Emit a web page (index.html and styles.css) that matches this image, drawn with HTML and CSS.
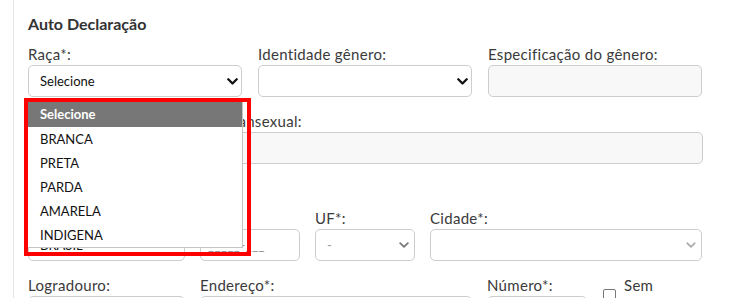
FILE: index.html
```html
<!DOCTYPE html>
<html lang="pt-BR">
<head>
<meta charset="utf-8">
<title>Auto Declaração</title>
<link rel="stylesheet" href="styles.css">
</head>
<body>
<div class="card">
  <section class="section">
    <h3 class="title">Auto Declaração</h3>
    <div class="row row-3">
      <div class="field">
        <label class="label">Raça*:</label>
        <div class="control select">
          <span class="value">Selecione</span>
          <svg class="chev" width="11" height="7" viewBox="0 0 11 7"><path d="M1.3 1.3 5.5 5.5 9.7 1.3" fill="none" stroke="#111" stroke-width="2.3" stroke-linecap="round" stroke-linejoin="round"/></svg>
        </div>
      </div>
      <div class="field">
        <label class="label">Identidade gênero:</label>
        <div class="control select">
          <span class="value"></span>
          <svg class="chev" width="11" height="7" viewBox="0 0 11 7"><path d="M1.3 1.3 5.5 5.5 9.7 1.3" fill="none" stroke="#111" stroke-width="2.3" stroke-linecap="round" stroke-linejoin="round"/></svg>
        </div>
      </div>
      <div class="field">
        <label class="label">Especificação do gênero:</label>
        <div class="control readonly"></div>
      </div>
    </div>
    <div class="row row-full">
      <div class="field">
        <label class="label">Nome social para travesti ou transexual:</label>
        <div class="control readonly"></div>
      </div>
    </div>
  </section>

  <section class="section">
    <h3 class="title">Endereço</h3>
    <div class="row row-a">
      <div class="field">
        <label class="label">País*:</label>
        <div class="control select">
          <span class="value">BRASIL</span>
          <svg class="chev" width="10" height="6" viewBox="0 0 10 6"><path d="M1.2 1.2 5 4.8 8.8 1.2" fill="none" stroke="#777" stroke-width="1.8" stroke-linecap="round" stroke-linejoin="round"/></svg>
        </div>
      </div>
      <div class="field">
        <label class="label">CEP*:</label>
        <div class="control input"><span class="mask">_____-___</span></div>
      </div>
      <div class="field">
        <label class="label">UF*:</label>
        <div class="control select">
          <span class="value muted">-</span>
          <svg class="chev chev-uf" width="10" height="6" viewBox="0 0 10 6"><path d="M1.2 1.2 5 4.8 8.8 1.2" fill="none" stroke="#7a7a7a" stroke-width="1.8" stroke-linecap="round" stroke-linejoin="round"/></svg>
        </div>
      </div>
      <div class="field">
        <label class="label">Cidade*:</label>
        <div class="control select">
          <span class="value"></span>
          <svg class="chev chev-uf" width="10" height="6" viewBox="0 0 10 6"><path d="M1.2 1.2 5 4.8 8.8 1.2" fill="none" stroke="#a8a8a8" stroke-width="1.6" stroke-linecap="round" stroke-linejoin="round"/></svg>
        </div>
      </div>
    </div>
    <div class="row row-b">
      <div class="field">
        <label class="label">Logradouro:</label>
        <div class="control input"></div>
      </div>
      <div class="field">
        <label class="label">Endereço*:</label>
        <div class="control input"></div>
      </div>
      <div class="field">
        <label class="label">Número*:</label>
        <div class="control input"></div>
      </div>
      <div class="check">
        <span class="box"></span>
        <span class="check-label">Sem Número</span>
      </div>
    </div>
  </section>
</div>

<ul class="dropdown">
  <li class="option active">Selecione</li>
  <li class="option">BRANCA</li>
  <li class="option">PRETA</li>
  <li class="option">PARDA</li>
  <li class="option">AMARELA</li>
  <li class="option">INDIGENA</li>
</ul>
<div class="highlight"></div>
</body>
</html>
```

FILE: styles.css
```css
html, body {
  margin: 0;
  padding: 0;
  background: #fff;
}

body {
  font-family: Lato, "Open Sans", "Liberation Sans", sans-serif;
  color: #363636;
  width: 730px;
  height: 298px;
  overflow: hidden;
  position: relative;
}

.card {
  margin-left: 13px;
  border-left: 1px solid #e4e4e4;
  padding: 14px 0 0 14px;
  height: 298px;
  box-sizing: border-box;
}

.section {
  margin-bottom: 14px;
}

.title {
  margin: 0 0 10px;
  font-size: 16px;
  line-height: 20px;
  font-weight: 700;
  color: #333;
}

.row {
  display: grid;
  column-gap: 16px;
  margin-bottom: 14px;
}

.row:last-child {
  margin-bottom: 0;
}

.row-3 {
  grid-template-columns: repeat(3, 214px);
}

.row-full {
  grid-template-columns: 675px;
}

.row-a {
  grid-template-columns: 157px 100px 100px 272px;
  column-gap: 15px;
}

.row-b {
  grid-template-columns: 157px 272px 100px auto;
  column-gap: 15px;
}

.label {
  display: block;
  font-size: 15px;
  line-height: 20px;
  margin-bottom: 1px;
  color: #3a3a3a;
  white-space: nowrap;
  letter-spacing: 0.3px;
}

.control {
  height: 32px;
  box-sizing: border-box;
  border: 1px solid #cdcdcd;
  border-radius: 5px;
  background: #fff;
  display: flex;
  align-items: center;
  justify-content: space-between;
  padding: 0 3px 0 11px;
  font-size: 13px;
  color: #111;
}

.readonly {
  background: #f8f8f8;
}

.input {
  padding-left: 7px;
}

.mask {
  color: #8a8a8a;
  letter-spacing: 0.5px;
}

.muted {
  color: #9a9a9a;
}

.chev {
  flex: none;
}

.chev-uf {
  margin-right: 2px;
}

.check {
  display: flex;
  align-items: center;
  gap: 8px;
  height: 40px;
  padding-left: 1px;
}

.box {
  width: 11px;
  height: 11px;
  border: 1px solid #777;
  border-radius: 2px;
  background: #fff;
  flex: none;
}

.check-label {
  width: 50px;
  font-size: 15px;
  line-height: 20px;
  color: #3a3a3a;
  letter-spacing: 0.3px;
}

.dropdown {
  position: absolute;
  left: 28px;
  top: 102px;
  width: 215px;
  margin: 0;
  padding: 0;
  list-style: none;
  background: #fff;
  border-right: 1px solid #c4c4c4;
  border-bottom: 1px solid #c4c4c4;
  box-sizing: border-box;
}

.option {
  height: 24px;
  line-height: 24px;
  padding-left: 12px;
  font-size: 13px;
  color: #111;
}

.option.active {
  height: 25px;
  line-height: 25px;
  background: #777;
  color: #fff;
  font-weight: 700;
}

.highlight {
  position: absolute;
  left: 24px;
  top: 98px;
  width: 227px;
  height: 158px;
  box-sizing: border-box;
  border: 4px solid #f00;
}
```
